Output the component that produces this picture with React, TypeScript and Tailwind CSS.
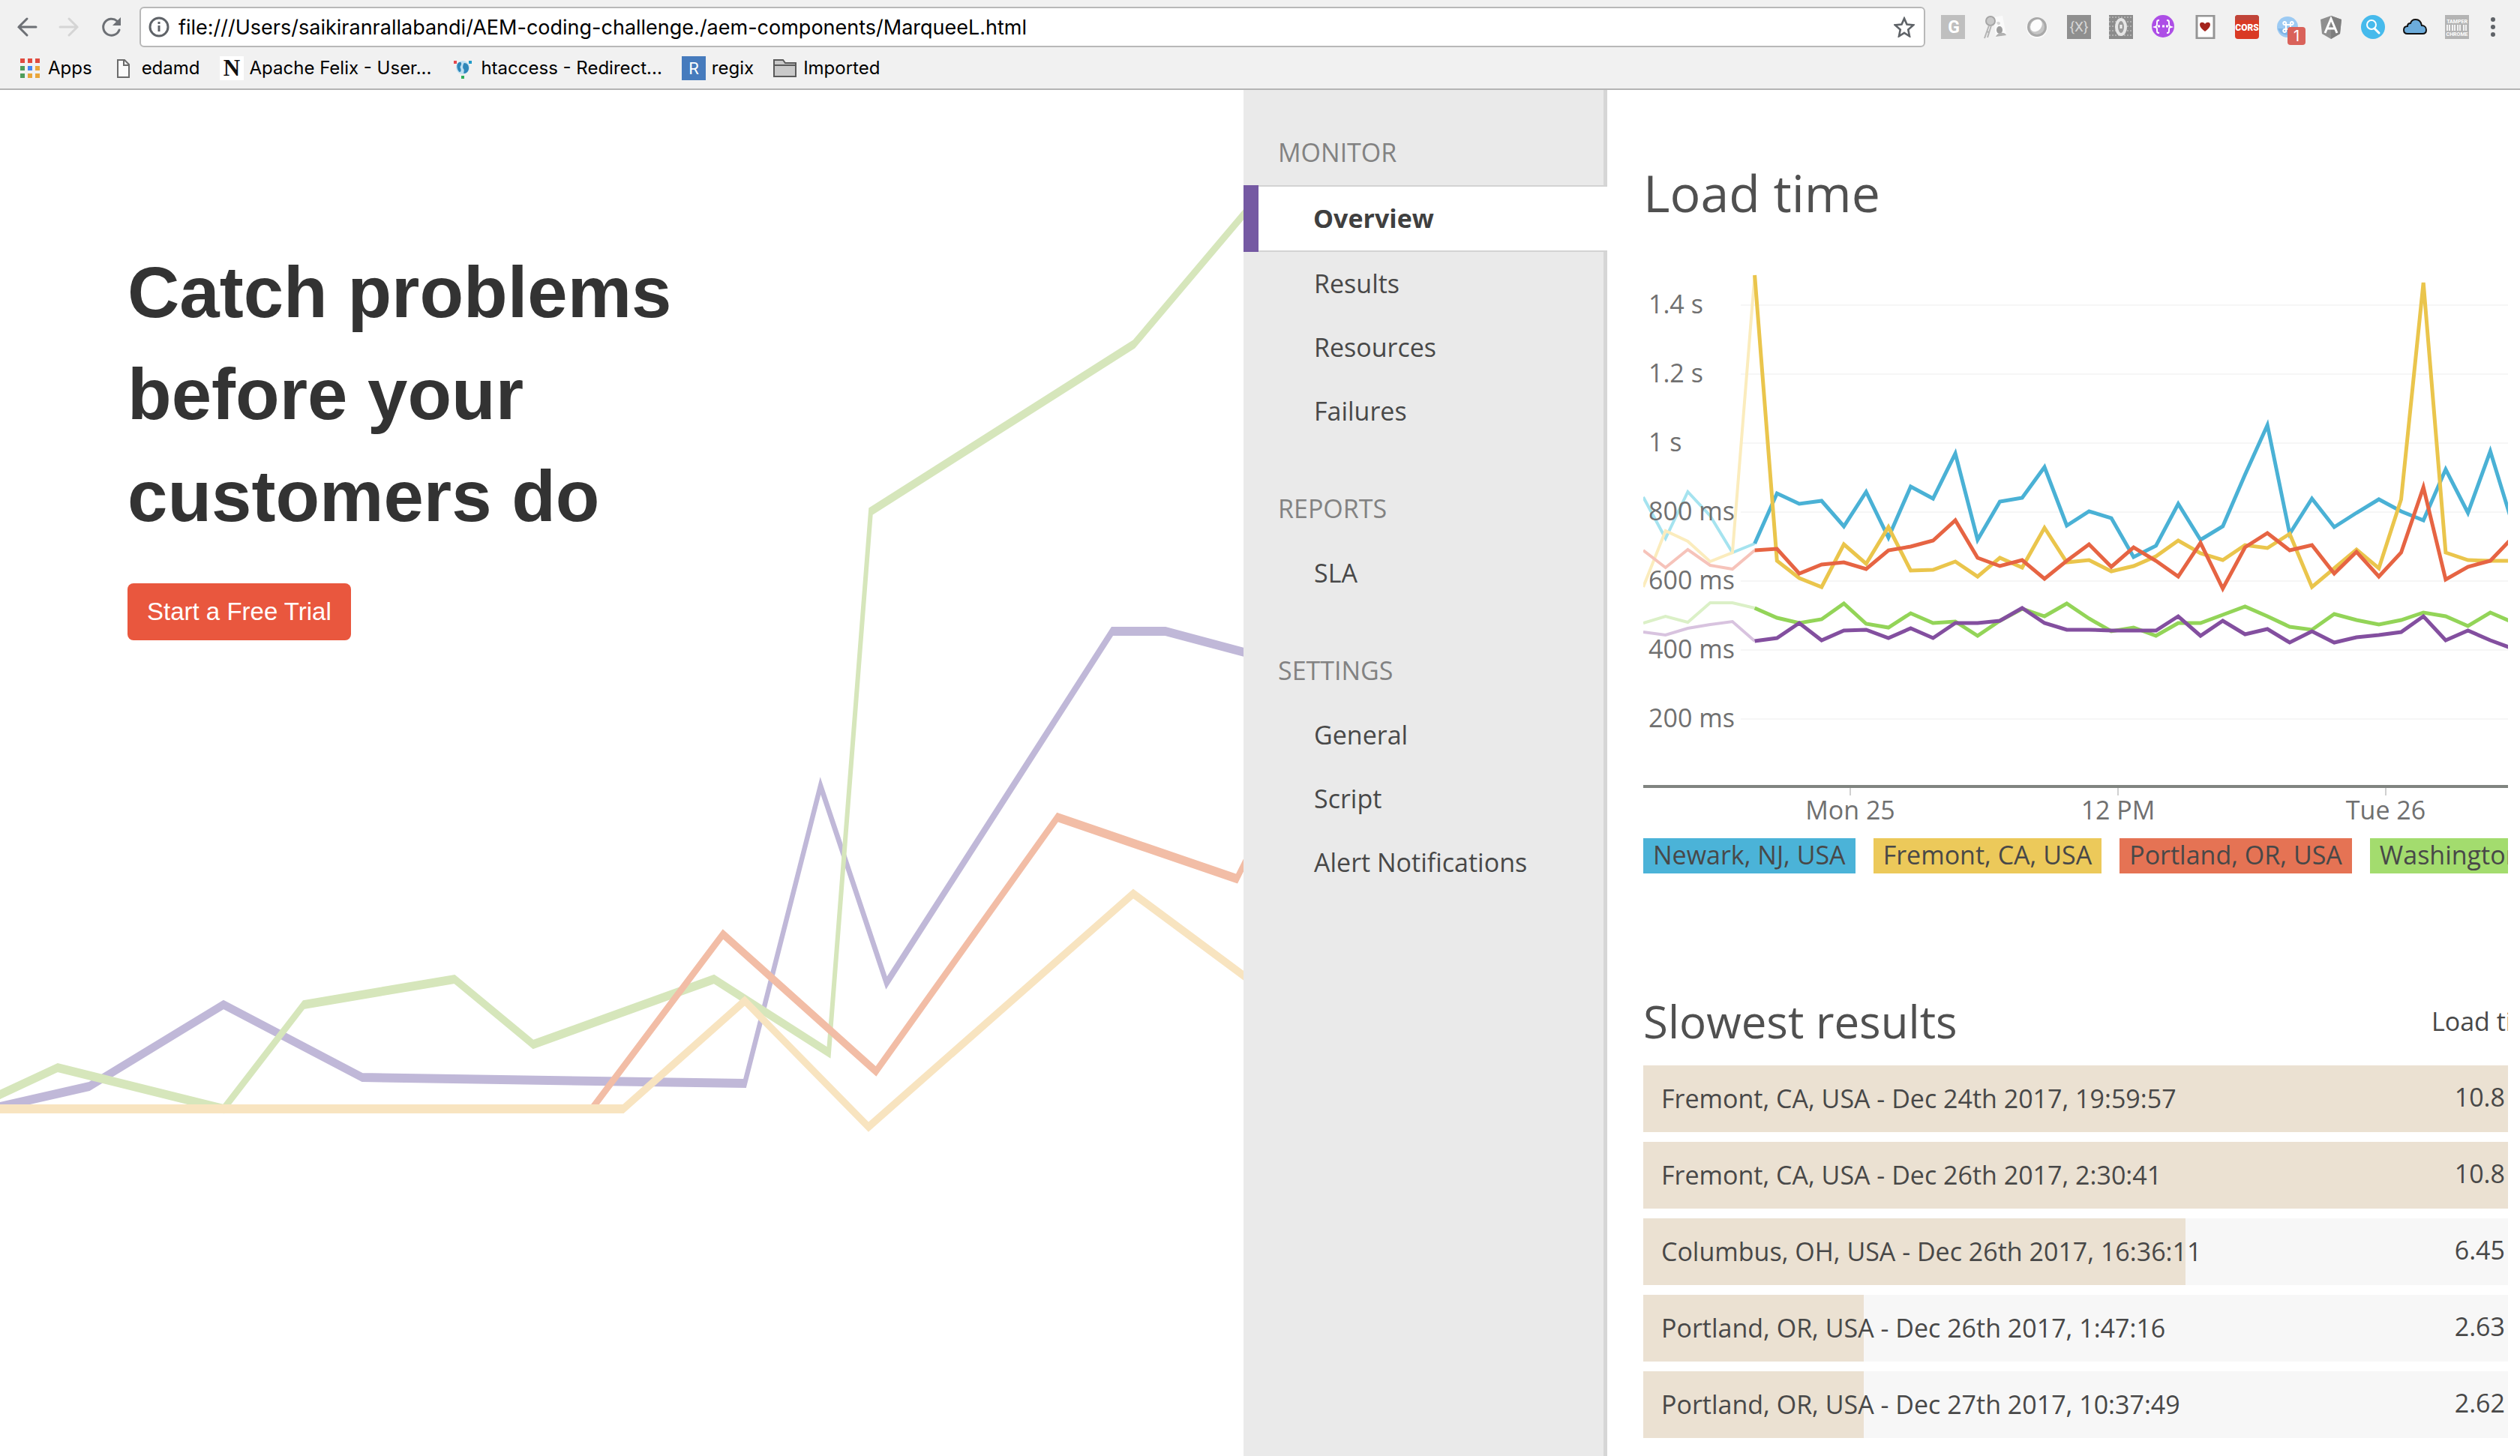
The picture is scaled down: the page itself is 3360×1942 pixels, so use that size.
import React from "react";

type Point = [number, number];

const STEP = 29.72;

const toPoints = (values: number[], from: number, to: number) =>
  values
    .slice(from, to)
    .map((y, i) => `${((i + from) * STEP).toFixed(1)},${y}`)
    .join(" ");

const LOCATIONS = [
  {
    name: "Newark, NJ, USA",
    chip: "bg-[#4bb3d8]",
    stroke: "#4ab1d5",
    faded: "#a5e3ef",
    values: [303, 358, 296, 328, 377, 365, 298, 312, 308, 342, 296, 357, 289, 305, 245, 360, 309, 304, 263, 341, 322, 331, 383, 368, 312, 360, 342, 273, 207, 352, 305, 343, 324, 306, 322, 334, 266, 324, 242, 339],
  },
  {
    name: "Fremont, CA, USA",
    chip: "bg-[#ecc95a]",
    stroke: "#eac54c",
    faded: "#fbecbd",
    values: [423, 348, 362, 389, 377, 7, 388, 411, 423, 366, 392, 343, 401, 400, 389, 409, 384, 397, 344, 390, 387, 402, 395, 382, 361, 378, 387, 367, 371, 352, 423, 398, 373, 398, 306, 17, 377, 387, 388, 388],
  },
  {
    name: "Portland, OR, USA",
    chip: "bg-[#e57354]",
    stroke: "#e66443",
    faded: "#f6c3ba",
    values: [374, 397, 373, 394, 399, 374, 372, 405, 393, 390, 399, 374, 369, 361, 334, 384, 395, 387, 412, 388, 366, 396, 370, 388, 409, 364, 425, 370, 351, 374, 367, 405, 376, 409, 377, 290, 413, 396, 388, 357],
  },
  {
    name: "Washington, DC, USA",
    chip: "bg-[#a3dc6e]",
    stroke: "#93d458",
    faded: "#dbf0c7",
    values: [471, 462, 470, 444, 444, 451, 464, 471, 466, 445, 472, 477, 458, 471, 469, 488, 468, 452, 462, 445, 465, 482, 477, 488, 471, 471, 460, 449, 462, 476, 480, 459, 467, 473, 467, 457, 462, 475, 457, 470],
  },
  {
    name: "Columbus, OH, USA",
    chip: "bg-[#7f469b]",
    stroke: "#834f9f",
    faded: "#d8c3df",
    values: [483, 487, 478, 473, 469, 495, 491, 471, 494, 481, 480, 491, 478, 491, 471, 471, 468, 451, 471, 480, 480, 481, 481, 481, 462, 488, 468, 486, 479, 497, 482, 497, 490, 487, 483, 462, 494, 481, 494, 505],
  },
];

const Y_LABELS = ["1.4 s", "1.2 s", "1 s", "800 ms", "600 ms", "400 ms", "200 ms"];

const X_LABELS = [
  { x: 276, text: "Mon 25" },
  { x: 633, text: "12 PM" },
  { x: 990, text: "Tue 26" },
];

const RESULTS = [
  { name: "Fremont, CA, USA - Dec 24th 2017, 19:59:57", value: "10.8", share: 100 },
  { name: "Fremont, CA, USA - Dec 26th 2017, 2:30:41", value: "10.8", share: 100 },
  { name: "Columbus, OH, USA - Dec 26th 2017, 16:36:11", value: "6.45", share: 62.7 },
  { name: "Portland, OR, USA - Dec 26th 2017, 1:47:16", value: "2.63", share: 25.5 },
  { name: "Portland, OR, USA - Dec 27th 2017, 10:37:49", value: "2.62", share: 25.5 },
];

const NAV = [
  { title: "MONITOR", items: ["Overview", "Results", "Resources", "Failures"] },
  { title: "REPORTS", items: ["SLA"] },
  { title: "SETTINGS", items: ["General", "Script", "Alert Notifications"] },
];

const TREND: { stroke: string; points: Point[] }[] = [
  {
    stroke: "#c0b8d8",
    points: [[-10, 1358], [0, 1356], [119, 1329], [298, 1220], [483, 1317], [993, 1325], [1094, 928], [1182, 1191], [1483, 722], [1554, 722], [1670, 753]],
  },
  {
    stroke: "#d6e6bb",
    points: [[-10, 1346], [0, 1340], [77, 1304], [298, 1359], [405, 1220], [606, 1186], [711, 1273], [952, 1186], [1105, 1284], [1161, 562], [1512, 339], [1670, 152]],
  },
  {
    stroke: "#f2bda6",
    points: [[789, 1359], [964, 1126], [1168, 1309], [1410, 970], [1649, 1052], [1670, 1010]],
  },
  {
    stroke: "#f8e4c0",
    points: [[-10, 1359], [831, 1359], [993, 1215], [1158, 1383], [1511, 1072], [1670, 1190]],
  },
];

function Icon({ children, className = "size-8" }: { children: React.ReactNode; className?: string }) {
  return (
    <svg viewBox="0 0 32 32" className={`${className} shrink-0`} aria-hidden="true">
      {children}
    </svg>
  );
}

const glyph = { textAnchor: "middle" as const, fontFamily: "Roboto, sans-serif" };

const EXTENSIONS: { label: string; art: React.ReactNode }[] = [
  {
    label: "Grammar checker",
    art: (
      <>
        <rect width="32" height="32" fill="#bfbfbf" />
        <text x="17" y="24" fontSize="23" fontWeight="700" fill="#fff" {...glyph}>G</text>
      </>
    ),
  },
  {
    label: "Password keys",
    art: (
      <>
        <path d="M14 3 26 1l5 25-14 4z" fill="#fafafa" />
        <ellipse cx="22" cy="20" rx="4" ry="5" fill="#9d9d9d" />
        <path d="M17 29c1-5 12-8 14-2z" fill="#b0b0b0" />
        <path d="M18 10c2-2 5-1 5 1s-3 3-4 1z" fill="#d5d5d5" />
        <circle cx="10" cy="8" r="6" fill="#c9c9c9" stroke="#a5a5a5" strokeWidth="2" />
        <path d="M8 14 2 31M11 14 6 30M5 22l3 1" stroke="#b4b4b4" strokeWidth="2" fill="none" />
      </>
    ),
  },
  {
    label: "Lens",
    art: (
      <>
        <circle cx="16" cy="17" r="14" fill="#fbfbfb" />
        <circle cx="16" cy="16" r="13" fill="#a9a9a9" />
        <circle cx="16" cy="16" r="10" fill="#c6c6c6" />
        <ellipse cx="15" cy="14" rx="7" ry="9" transform="rotate(40 15 14)" fill="#fdfdfd" />
      </>
    ),
  },
  {
    label: "Expression viewer",
    art: (
      <>
        <rect width="32" height="32" fill="#8f8f8f" />
        <text x="16" y="22" fontSize="19" fill="#d6d6d6" {...glyph}>{"{X}"}</text>
      </>
    ),
  },
  {
    label: "Code viewer",
    art: (
      <>
        <rect width="32" height="32" fill="#8c8c8c" />
        <path d="M0 3h32M0 9h32M0 15h32M0 21h32M0 27h32" stroke="#b0b0b0" strokeWidth="2" strokeDasharray="2 2" />
        <ellipse cx="16" cy="16" rx="6" ry="10" fill="#9b9b9b" stroke="#e6e6e6" strokeWidth="4" />
        <path d="M16 13v5" stroke="#eee" strokeWidth="3" />
      </>
    ),
  },
  {
    label: "JSON viewer",
    art: (
      <>
        <circle cx="16" cy="15" r="15" fill="#ad4ee6" />
        <path d="M11 7c-3 0-3 1-3 4s0 4-3 5c3 1 3 1 3 4s0 4 3 4M21 7c3 0 3 1 3 4s0 4 3 5c-3 1-3 1-3 4s0 4-3 4" fill="none" stroke="#fff" strokeWidth="2" />
        <path d="M9 15h3M15 15h3M20 15h3" stroke="#fff" strokeWidth="3" />
      </>
    ),
  },
  {
    label: "Cards",
    art: (
      <>
        <rect x="5" y="1" width="23" height="30" fill="#fff" stroke="#969696" strokeWidth="3" />
        <path d="M16 22c-4-3-7-6-7-9 0-4 5-4 7-1 2-3 7-3 7 1 0 3-3 6-7 9z" fill="#a4241c" />
      </>
    ),
  },
  {
    label: "CORS toggle",
    art: (
      <>
        <rect width="32" height="32" rx="4" fill="#d93a24" />
        <path d="M0 7V4a4 4 0 0 1 4-4h24a4 4 0 0 1 4 4v3z" fill="#c04439" />
        <text x="16" y="21" fontSize="12" fontWeight="900" fill="#fff" {...glyph}>CORS</text>
      </>
    ),
  },
  {
    label: "Shortcuts",
    art: (
      <>
        <circle cx="14" cy="16" r="14" fill="#9ccaf3" />
        <path d="M1 18a14 14 0 0 0 26 0z" fill="#7fb4e6" />
        <path d="M12 13h6v6h-6zM12 13h-2a2 2 0 1 1 2-3zM18 13v-3a2 2 0 1 1 2 3zM18 19h2a2 2 0 1 1-2 3zM12 19v3a2 2 0 1 1-2-3z" fill="none" stroke="#fff" strokeWidth="2" />
      </>
    ),
  },
  {
    label: "Angular inspector",
    art: (
      <>
        <path d="M16 1 30 6l-2 19-12 7-12-7L2 6z" fill="#8f8f8f" />
        <path d="M16 1v31l12-7 2-19z" fill="#7f7f7f" />
        <path d="M8 24 16 5l8 19M11 18h10" fill="none" stroke="#fff" strokeWidth="3" />
      </>
    ),
  },
  {
    label: "Search",
    art: (
      <>
        <circle cx="16" cy="16" r="16" fill="#46baec" />
        <circle cx="14" cy="13" r="6" fill="none" stroke="#fff" strokeWidth="2" />
        <path d="m18 18 6 6" stroke="#fff" strokeWidth="3" strokeLinecap="round" />
      </>
    ),
  },
  {
    label: "Cloud",
    art: (
      <path d="M6 25c-3 0-5-2-5-5s2-5 5-5c0-3 2-4 4-4 1-4 4-5 7-5 4 0 7 3 8 8 4 0 6 3 6 6 0 3-2 5-5 5z" fill="#6cacdb" stroke="#111" strokeWidth="2" />
    ),
  },
  {
    label: "Tamper",
    art: (
      <>
        <rect width="32" height="32" fill="#b4b4b4" />
        <path d="M3 13v8M6 13v8M10 13v8M13 13v8M17 13v8M20 13v8M25 13v8M28 13v8" stroke="#f2f2f2" strokeWidth="2" />
        <text x="16" y="11" fontSize="7" fontWeight="700" fill="#fff" {...glyph}>TAMPER</text>
        <text x="16" y="28" fontSize="7" fontWeight="700" fill="#fff" {...glyph}>CHROME</text>
      </>
    ),
  },
];

function BrowserBar() {
  return (
    <header className="border-b-2 border-[#b4b4b4] bg-[#f1f1f1] font-[Inter,Roboto,sans-serif] text-black">
      <div className="flex h-[72px] items-center pr-5 pl-5">
        <button aria-label="Back" className="mr-6">
          <Icon>
            <path d="M28 16H5M16 5 5 16l11 11" fill="none" stroke="#6d7075" strokeWidth="3" strokeLinecap="round" />
          </Icon>
        </button>
        <button aria-label="Forward" className="mr-6">
          <Icon>
            <path d="M4 16h23M16 5l11 11-11 11" fill="none" stroke="#d5d5d5" strokeWidth="3" strokeLinecap="round" />
          </Icon>
        </button>
        <button aria-label="Reload" className="mr-[22px]">
          <Icon>
            <path d="M27 20a11 11 0 1 1-3-12" fill="none" stroke="#6d7075" strokeWidth="3" strokeLinecap="round" />
            <path d="M29 3v11H18z" fill="#6d7075" />
          </Icon>
        </button>
        <div className="flex h-[54px] flex-1 items-center rounded-md border-2 border-[#b8b8b8] bg-white pr-3 pl-[10px]">
          <svg viewBox="0 0 28 28" className="size-7 shrink-0" aria-hidden="true">
            <circle cx="14" cy="14" r="12" fill="none" stroke="#5f6368" strokeWidth="3" />
            <path d="M14 12v8M14 7v3" stroke="#5f6368" strokeWidth="3" />
          </svg>
          <input
            aria-label="Address"
            className="ml-3 min-w-0 flex-1 bg-transparent pt-0.5 text-[27px] outline-none"
            defaultValue="file:///Users/saikiranrallabandi/AEM-coding-challenge./aem-components/MarqueeL.html"
          />
          <button aria-label="Bookmark this page">
            <Icon className="size-7">
              <path d="m16 3 4 9 10 1-8 7 2 10-8-5-8 5 2-10-8-7 10-1z" fill="none" stroke="#5f6368" strokeWidth="3" />
            </Icon>
          </button>
        </div>
        <div className="ml-[21px] flex items-center gap-6">
          {EXTENSIONS.map((ext) => (
            <button key={ext.label} aria-label={ext.label} className="relative">
              <Icon>{ext.art}</Icon>
              {ext.label === "Shortcuts" && (
                <span className="absolute top-4 left-[14px] h-6 w-6 rounded-sm bg-[#d9625a] text-center text-[20px] leading-6 text-white">1</span>
              )}
            </button>
          ))}
        </div>
        <button aria-label="Menu" className="ml-4">
          <svg viewBox="0 0 8 28" className="h-7 w-8" aria-hidden="true">
            <circle cx="4" cy="4" r="3" fill="#5f6368" />
            <circle cx="4" cy="14" r="3" fill="#5f6368" />
            <circle cx="4" cy="24" r="3" fill="#5f6368" />
          </svg>
        </button>
      </div>
      <nav className="flex h-[46px] items-start gap-[26px] pl-6 text-[24px] leading-[38px]">
        <a href="#apps" className="flex items-center gap-2">
          <Icon>
            {["#e04b3f", "#e04b3f", "#e04b3f", "#4e9d5b", "#4285f4", "#e9a63a", "#4e9d5b", "#e9a63a", "#e9a63a"].map((fill, i) => (
              <rect key={i} x={3 + (i % 3) * 10} y={3 + Math.floor(i / 3) * 10} width="6" height="6" fill={fill} />
            ))}
          </Icon>
          Apps
        </a>
        <a href="#edamd" className="flex items-center gap-2">
          <Icon>
            <path d="M8 5h9l6 6v17H8zM16 5v7h7" fill="#fafafa" stroke="#6b6b6b" strokeWidth="2" />
          </Icon>
          edamd
        </a>
        <a href="#felix" className="flex items-center gap-2">
          <Icon>
            <rect width="32" height="32" fill="#fff" />
            <text x="16" y="26" fontSize="31" fontWeight="700" fill="#111" textAnchor="middle" fontFamily="Liberation Serif, serif">N</text>
          </Icon>
          Apache Felix - User...
        </a>
        <a href="#htaccess" className="flex items-center gap-2">
          <Icon>
            <circle cx="16" cy="15" r="9" fill="#bfe0f2" />
            <path d="M9 10c3-4 6-2 5 1s-2 3-1 5 1 5-1 5-5-7-3-11zM18 9c4 0 6 3 6 7s-3 7-6 7c-2 0 1-4-1-6s0-8 1-8z" fill="#2e87b9" />
            <path d="M4 6h4v4H4z" fill="#e5484d" />
            <path d="M24 6h4v4h-4z" fill="#1f9bc9" />
            <path d="M14 26h4v4h-4z" fill="#2faf5a" />
          </Icon>
          htaccess - Redirect...
        </a>
        <a href="#regix" className="flex items-center gap-2">
          <Icon>
            <rect width="32" height="32" fill="#467bbd" />
            <text x="16" y="24" fontSize="22" fill="#fff" {...glyph}>R</text>
          </Icon>
          regix
        </a>
        <a href="#imported" className="flex items-center gap-2">
          <Icon>
            <path d="M1 27V5h12l3 4h14v18z" fill="#c9c9c9" stroke="#5a5a5a" strokeWidth="2" />
            <path d="M2 12h28" stroke="#5a5a5a" strokeWidth="2" />
          </Icon>
          Imported
        </a>
      </nav>
    </header>
  );
}

function Hero() {
  return (
    <section className="relative min-w-0 overflow-hidden bg-white">
      <svg viewBox="0 0 3316 1822" preserveAspectRatio="none" className="absolute inset-0 h-full w-full" aria-hidden="true">
        {TREND.map((line) => (
          <polyline
            key={line.stroke}
            points={line.points.map(([x, y]) => `${x * 2},${y}`).join(" ")}
            fill="none"
            stroke={line.stroke}
            strokeWidth="12"
            strokeMiterlimit="10"
          />
        ))}
      </svg>
      <div className="relative pt-[202px] pl-[170px] font-['Liberation_Sans',Arial,sans-serif]">
        <h1 className="max-w-[780px] text-[96px] leading-[136px] font-bold text-[#333]">
          Catch problems before your customers do
        </h1>
        <button className="mt-[48px] h-[76px] rounded-lg bg-[#e9573e] px-[26px] text-[33px] text-white">Start a Free Trial</button>
      </div>
    </section>
  );
}

function Sidebar() {
  return (
    <aside className="min-w-0 bg-[#eaeaea] pt-[60px] text-[34px] text-[#484848] shadow-[inset_-5px_0_0_#d6d6d6]">
      {NAV.map((group) => (
        <nav key={group.title} aria-label={group.title} className="mb-[64px]">
          <h2 className="mb-[21px] pl-[46px] leading-[46px] text-[#828282]">{group.title}</h2>
          <ul>
            {group.items.map((item) => (
              <li key={item}>
                {item === "Overview" ? (
                  <a href="#overview" className="flex">
                    <span className="w-5 bg-[#7559a3]" />
                    <span className="h-[89px] flex-1 border-y-2 border-[#d3d3d3] bg-white pl-[73px] leading-[84px] font-bold text-[#3f3f3f]">{item}</span>
                  </a>
                ) : (
                  <a href={`#${item.toLowerCase()}`} className="block pl-[94px] leading-[85px]">{item}</a>
                )}
              </li>
            ))}
          </ul>
        </nav>
      ))}
    </aside>
  );
}

function LoadChart() {
  return (
    <svg viewBox="0 0 1153 748" className="block w-full" role="img" aria-label="Load time by location">
      {Y_LABELS.map((label, i) => (
        <path key={label} d={`M130 ${47 + i * 92}H1153`} stroke="#f6f6f6" strokeWidth="2" />
      ))}
      {LOCATIONS.map((loc) => (
        <g key={loc.name} fill="none" strokeMiterlimit="10">
          <polyline points={toPoints(loc.values, 0, 6)} stroke={loc.faded} strokeWidth="4" />
          <polyline points={toPoints(loc.values, 5, 40)} stroke={loc.stroke} strokeWidth="5" />
        </g>
      ))}
      <path d="M0 689H1153" stroke="#808480" strokeWidth="4" />
      <g fontSize="34" fill="#707070" fontFamily="Open Sans, sans-serif">
        {Y_LABELS.map((label, i) => (
          <text key={label} x="7" y={58 + i * 92}>{label}</text>
        ))}
        {X_LABELS.map((label) => (
          <g key={label.text}>
            <path d={`M${label.x} 691v10`} stroke="#d0d0d0" strokeWidth="2" />
            <text x={label.x} y="733" textAnchor="middle">{label.text}</text>
          </g>
        ))}
      </g>
    </svg>
  );
}

function Dashboard() {
  return (
    <main className="mr-4 min-w-0 overflow-hidden bg-white pl-12 text-[#484848]">
      <h2 className="pt-[87px] text-[68px] leading-[100px] text-[#505050]">Load time</h2>
      <div className="mt-[53px]">
        <LoadChart />
      </div>
      <ul className="mt-[10px] flex gap-6 text-[34px] leading-[44px] whitespace-nowrap">
        {LOCATIONS.slice(0, 4).map((loc) => (
          <li key={loc.name} className={`${loc.chip} shrink-0 px-[13px] pb-[3px]`}>{loc.name}</li>
        ))}
      </ul>
      <table className="mt-[147px] block w-full">
        <thead className="block">
          <tr className="flex h-[100px] items-center">
            <th className="flex-1 text-left text-[60px] leading-[100px] font-normal text-[#505050]">Slowest results</th>
            <th className="w-[102px] text-left text-[34px] font-normal whitespace-nowrap">Load time</th>
          </tr>
        </thead>
        <tbody className="mt-[9px] flex flex-col gap-[13px]">
          {RESULTS.map((row) => (
            <tr key={row.name} className="relative flex h-[89px] items-center bg-[#f7f7f7] text-[34px]">
              <td aria-hidden="true" className="absolute inset-y-0 left-0 bg-[#ebe1d2]" style={{ width: `${row.share}%` }} />
              <td className="relative flex-1 pl-6">{row.name}</td>
              <td className="relative pr-1 pb-1">{row.value}</td>
            </tr>
          ))}
        </tbody>
      </table>
    </main>
  );
}

export default function App() {
  return (
    <div className="flex min-h-screen flex-col bg-white">
      <BrowserBar />
      <div className="grid flex-1 grid-cols-[1658fr_485fr_1217fr] overflow-hidden font-['Open_Sans','Noto_Sans',sans-serif]">
        <Hero />
        <Sidebar />
        <Dashboard />
      </div>
    </div>
  );
}
